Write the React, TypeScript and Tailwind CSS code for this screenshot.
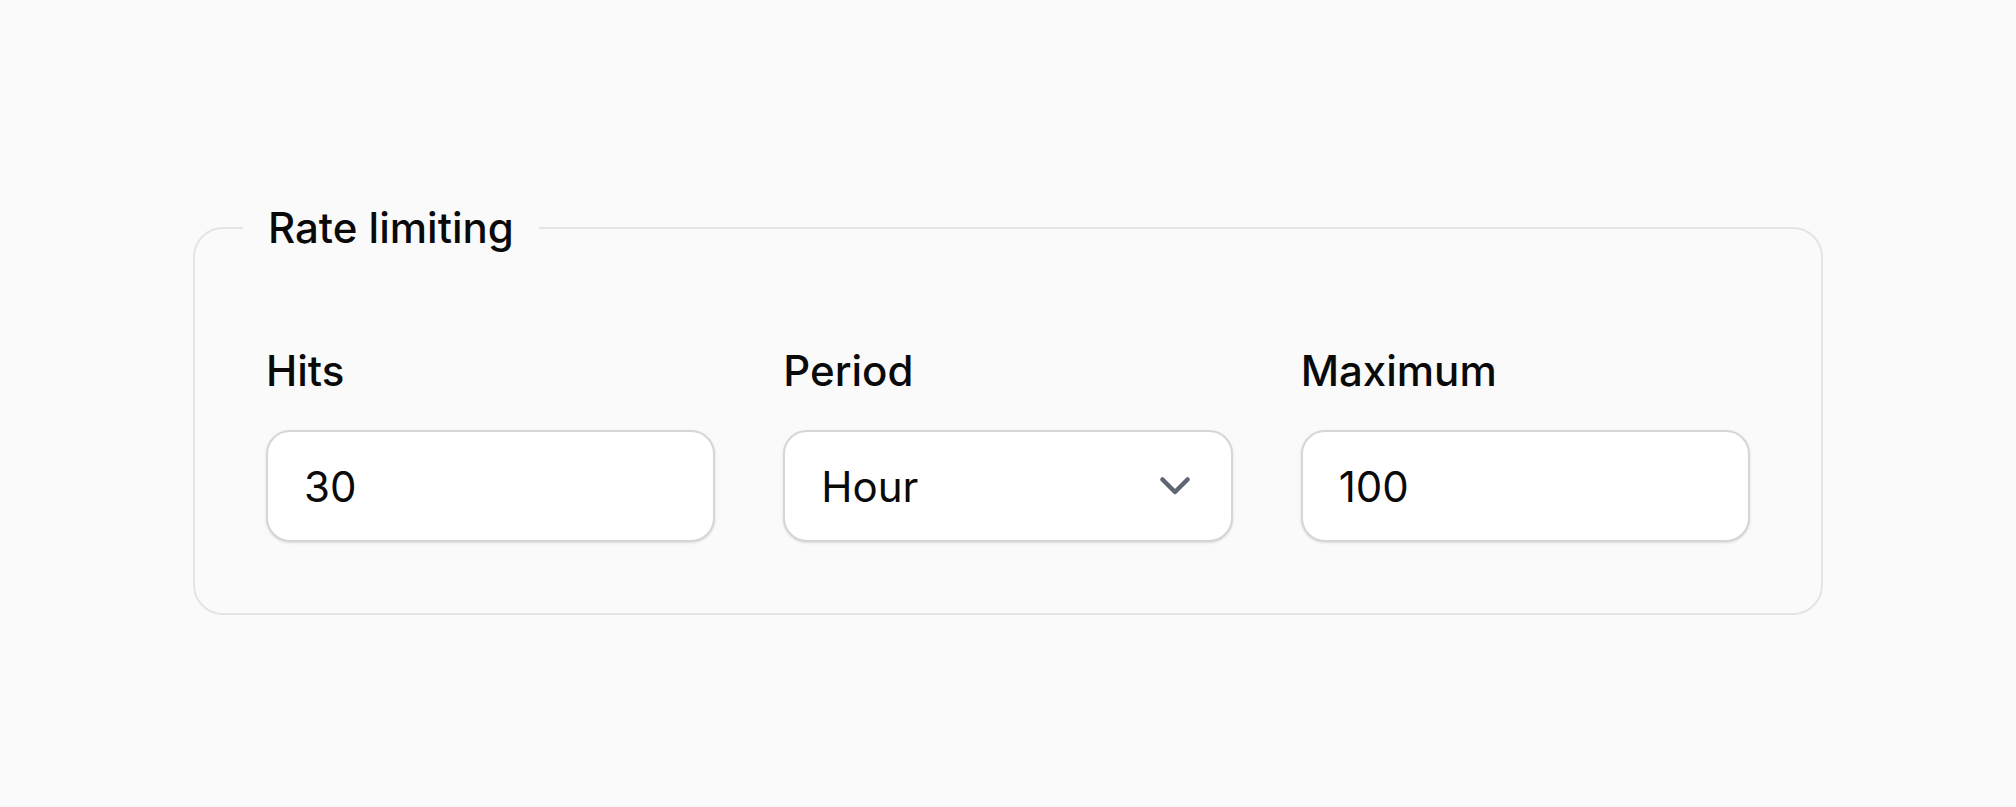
import { useState } from "react";

function Field({ label, children }: { label: string; children: React.ReactNode }) {
  return (
    <div className="flex flex-col">
      <label className="mb-[35px] text-[42px] leading-[48px] font-medium text-[#0a0a0a]">
        {label}
      </label>
      {children}
    </div>
  );
}

export default function App() {
  const [hits, setHits] = useState("30");
  const [max, setMax] = useState("100");

  return (
    <div
      className="min-h-[807px] bg-[#fafafa] px-[193px] pt-[204px]"
      style={{ fontFamily: "Inter, 'Noto Sans', sans-serif" }}
    >
      <fieldset className="rounded-[30px] border-2 border-[#e4e4e4] px-[71px] pt-[95px] pb-[71px]">
        <legend className="-ml-[23px] px-[25px] text-[42px] leading-[48px] font-medium text-[#0a0a0a]">
          Rate limiting
        </legend>

        <div className="grid grid-cols-3 gap-[68px]">
          <Field label="Hits">
            <input
              value={hits}
              onChange={(e) => setHits(e.target.value)}
              className="h-[112px] w-full rounded-[24px] border-2 border-[#d6d6d6] bg-white px-[36px] text-[42px] text-[#0a0a0a] shadow-sm outline-none"
            />
          </Field>

          <Field label="Period">
            <button className="flex h-[112px] w-full items-center justify-between rounded-[24px] border-2 border-[#d6d6d6] bg-white pl-[36px] pr-[41px] text-[42px] text-[#0a0a0a] shadow-sm">
              <span>Hour</span>
              <svg width="30" height="18" viewBox="0 0 30 18" fill="none">
                <path
                  d="M2.5 2.5 L15 15 L27.5 2.5"
                  stroke="#5f6673"
                  strokeWidth="4.5"
                  strokeLinecap="round"
                  strokeLinejoin="round"
                />
              </svg>
            </button>
          </Field>

          <Field label="Maximum">
            <input
              value={max}
              onChange={(e) => setMax(e.target.value)}
              className="h-[112px] w-full rounded-[24px] border-2 border-[#d6d6d6] bg-white px-[36px] text-[42px] text-[#0a0a0a] shadow-sm outline-none"
            />
          </Field>
        </div>
      </fieldset>
    </div>
  );
}
